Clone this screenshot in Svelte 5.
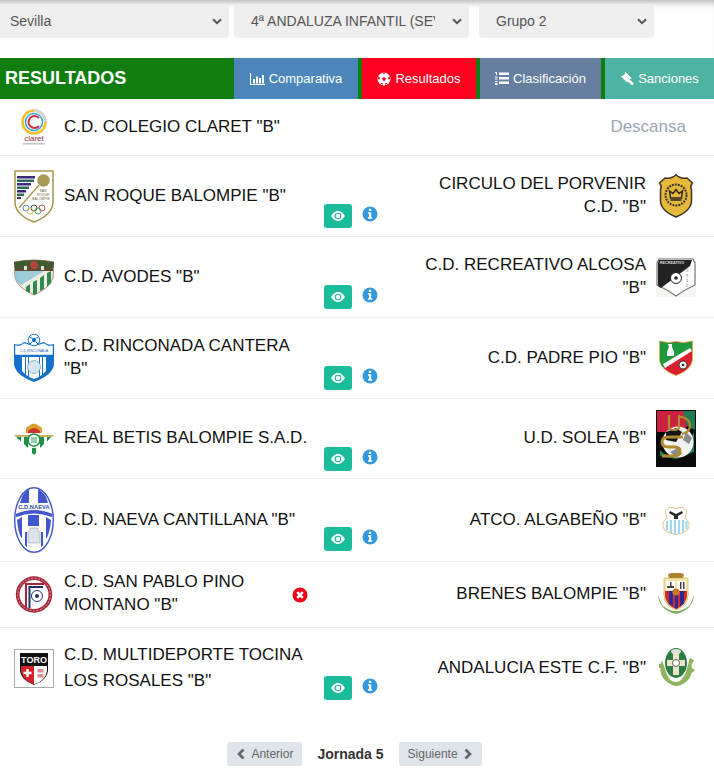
<script>
  const selects = [
    { label: 'Sevilla', cls: 'province' },
    { label: '4ª ANDALUZA INFANTIL (SEVILLA)', cls: 'league' },
    { label: 'Grupo 2', cls: 'group' }
  ];
  const tabs = [
    { label: 'Comparativa', icon: 'bars', cls: 'blue' },
    { label: 'Resultados', icon: 'ball', cls: 'red' },
    { label: 'Clasificación', icon: 'list', cls: 'slate' },
    { label: 'Sanciones', icon: 'gavel', cls: 'teal' }
  ];
  const rows = [
    { home: 'C.D. COLEGIO CLARET "B"', homeCrest: 'claret', rest: true, h: 56 },
    { home: 'SAN ROQUE BALOMPIE "B"', homeCrest: 'roque', away: 'CIRCULO DEL PORVENIR C.D. "B"', awayCrest: 'circulo', h: 80 },
    { home: 'C.D. AVODES "B"', homeCrest: 'avodes', away: 'C.D. RECREATIVO ALCOSA "B"', awayCrest: 'alcosa', h: 80 },
    { home: 'C.D. RINCONADA CANTERA "B"', homeCrest: 'rinconada', away: 'C.D. PADRE PIO "B"', awayCrest: 'pio', h: 80 },
    { home: 'REAL BETIS BALOMPIE S.A.D.', homeCrest: 'betis', away: 'U.D. SOLEA "B"', awayCrest: 'solea', h: 79 },
    { home: 'C.D. NAEVA CANTILLANA "B"', homeCrest: 'naeva', away: 'ATCO. ALGABEÑO "B"', awayCrest: 'algabeno', h: 82 },
    { home: 'C.D. SAN PABLO PINO MONTANO "B"', homeCrest: 'pablo', away: 'BRENES BALOMPIE "B"', awayCrest: 'brenes', h: 65, cancelled: true },
    { home: 'C.D. MULTIDEPORTE TOCINA LOS ROSALES "B"', homeCrest: 'toro', away: 'ANDALUCIA ESTE C.F. "B"', awayCrest: 'andalucia', h: 80, loose: true }
  ];
</script>

{#snippet crest(id)}
  {#if id === 'claret'}
    <svg width="28" height="37" viewBox="0 0 28 37">
      <circle cx="14" cy="13" r="11.500" fill="none" stroke="#f5c02c" stroke-width="2.600"/>
      <path d="M14 1.500A11.500 11.500 0 0 1 25.500 13" fill="none" stroke="#d5d5d8" stroke-width="2.600"/>
      <circle cx="14" cy="13" r="8.500" fill="none" stroke="#37a6de" stroke-width="1.600"/>
      <path d="M19 9A6 6 0 1 0 19 17" fill="none" stroke="#c8324a" stroke-width="2"/>
      <text x="14" y="32" class="t" font-size="8" fill="#8a3040" text-anchor="middle">claret</text>
      <rect x="3" y="34" width="22" height="1.600" fill="#c9c3c8"/>
    </svg>
  {:else if id === 'roque'}
    <svg width="40" height="53" viewBox="0 0 40 53">
      <path d="M1 1H39V33Q38 45 20 52Q2 45 1 33Z" fill="#fff" stroke="#a5954e" stroke-width="1.500"/>
      <path d="M3 6h18v2.500H3z" fill="#3b2a75"/><path d="M3 9.500h17V12H3z" fill="#2e6b55"/>
      <path d="M3 13h14v2.500H3z" fill="#3b2a75"/><path d="M3 16.500h12V19H3z" fill="#2e6b55"/>
      <path d="M3 20h9v2.500H3z" fill="#3b2a75"/><path d="M3 23.500h7V26H3z" fill="#2e6b55"/>
      <path d="M3 27h4v2H3z" fill="#3b2a75"/>
      <circle cx="29.500" cy="10.500" r="6.200" fill="#a89a55"/>
      <path d="M25 15L5 38" stroke="#a5954e" stroke-width="1.300"/>
      <text x="29" y="22" class="t" font-size="3.400" fill="#6b6540" text-anchor="middle">SAN</text>
      <text x="29" y="26" class="t" font-size="3.400" fill="#6b6540" text-anchor="middle">ROQUE</text>
      <text x="27" y="30" class="t" font-size="3.400" fill="#6b6540" text-anchor="middle">BALOMPIE</text>
      <g fill="none" stroke-width="0.900">
        <circle cx="12" cy="38" r="3" stroke="#4a7fc0"/><circle cx="20" cy="38" r="3" stroke="#333"/><circle cx="28" cy="38" r="3" stroke="#c44"/>
        <circle cx="16" cy="41" r="3" stroke="#d9b93f"/><circle cx="24" cy="41" r="3" stroke="#4a9a5a"/>
      </g>
    </svg>
  {:else if id === 'avodes'}
    <svg width="40" height="37" viewBox="0 0 40 37">
      <path d="M0 3Q20-1 40 3L39 19Q36 29 20 36Q4 29 1 19Z" fill="#f1ece4" stroke="#a9705c" stroke-width="0.800"/>
      <path d="M0 3Q20-1 40 3L39.500 9H.5Z" fill="#3d5a30"/>
      <path d="M1 9H39L39 12H1Z" fill="#5e4a36"/>
      <circle cx="20" cy="6" r="4" fill="#b0483a"/>
      <rect x="10" y="7" width="3" height="4" fill="#e6e0d0"/><rect x="27" y="7" width="3" height="4" fill="#e6e0d0"/>
      <path d="M1 12H30L7 26Q2 23 1 19Z" fill="#93c7d6"/>
      <path d="M30 12L7 26L4 12Z" fill="#a9d1dc" opacity=".5"/>
      <path d="M12 28L16 25V34L12 32ZM19 23L23 21V35L19 36ZM26 19L30 16V30L26 32ZM33 14L37 12V24L33 28Z" fill="#2f8a4e"/>
    </svg>
  {:else if id === 'rinconada'}
    <svg width="40" height="49" viewBox="0 0 40 49">
      <path d="M0 10Q6 12 10 8Q20 12 30 8Q34 12 40 10V30Q39 41 20 48Q1 41 0 30Z" fill="#1470c8"/>
      <path d="M1 11Q6 13 10 9Q20 13 30 9Q34 13 39 11V21H1Z" fill="#fff" stroke="#1470c8" stroke-width="0.500"/>
      <circle cx="20" cy="6" r="5.800" fill="#fff" stroke="#1470c8" stroke-width="1"/>
      <circle cx="20" cy="6" r="2.200" fill="#1470c8"/>
      <path d="M15.500 3l2.500 1M24.500 3l-2.500 1M16 10l2-2M24 10l-2-2" stroke="#1470c8" stroke-width="1"/>
      <text x="20" y="17.500" class="t" font-size="3.500" fill="#1a5ea8" text-anchor="middle">C.D.RINCONADA</text>
      <path d="M8 23h3v17l-3-3ZM12 23h2v19l-2-1ZM26 23h2v18l-2 1ZM29 23h3v14l-3 3Z" fill="#fff"/>
      <path d="M15 23H25V43L20 45L15 43Z" fill="#fff"/>
      <circle cx="20" cy="33" r="6.500" fill="#d9e6f2" stroke="#7fa7cc" stroke-width="0.800"/>
    </svg>
  {:else if id === 'betis'}
    <svg width="40" height="33" viewBox="0 0 40 33">
      <path d="M0 13H40L20 33Z" fill="#fff"/>
      <path d="M0 13H40L38 15H2Z" fill="#c8b45a"/>
      <path d="M3 15h4v4.500L3 16ZM10 15h4v11l-4-4ZM26 15h4v7l-4 4ZM33 15h4l-4 4.500Z" fill="#1d9248"/>
      <path d="M17.500 15h5v17h-5z" fill="#e7efe2"/><path d="M18 26h4v5l-2 2-2-2z" fill="#1d9248"/>
      <circle cx="20" cy="18" r="6" fill="#fff" stroke="#1d9248" stroke-width="1.600"/>
      <path d="M17 16h6M17 18h6M17 20h6" stroke="#1d9248" stroke-width="0.900"/>
      <path d="M12 11Q11 5 15 4Q20-1 25 4Q29 5 28 11Z" fill="#d9a02b"/>
      <path d="M14 9Q20 3 26 9V11H14Z" fill="#c8342e"/>
    </svg>
  {:else if id === 'naeva'}
    <svg width="40" height="66" viewBox="0 0 40 66">
      <ellipse cx="20" cy="33" rx="19.300" ry="32.300" fill="#fff" stroke="#4257c9" stroke-width="1.400"/>
      <path d="M6 16Q8 6 15 2V16ZM24 2Q32 6 34 16H24Z" fill="#4257c9"/>
      <path d="M1.500 27Q20 19 38.500 27L38 30Q20 23 2 30Z" fill="#4257c9"/>
      <path d="M3 33L8 30V52Q4 46 3 33ZM37 33L32 30V52Q36 46 37 33ZM14 28H25V39H14ZM11 45h2V60l-2-1.500zM27 45h2v13.500L27 60z" fill="#4257c9"/>
      <text x="20" y="22" class="t b" font-size="5.800" fill="#3447ad" text-anchor="middle">C.D.NAEVA</text>
      <path d="M16 41h8v3l2 1v11H14V45l2-1z" fill="#dfe4ea" stroke="#8795a8" stroke-width="0.500"/>
    </svg>
  {:else if id === 'pablo'}
    <svg width="38" height="39" viewBox="0 0 38 39">
      <circle cx="19" cy="19.500" r="18.200" fill="#a5273a"/>
      <circle cx="19" cy="19.500" r="14.500" fill="#fff"/>
      <circle cx="19" cy="19.500" r="16.300" fill="none" stroke="#e8cfd3" stroke-width="0.700" stroke-dasharray="2 1.500"/>
      <path d="M10 8H29V10H12V32H10Z" fill="#a5273a"/>
      <path d="M13.500 11H28V13H15.500V33H13.500Z" fill="#22306b"/>
      <circle cx="22" cy="21" r="5.500" fill="#fff" stroke="#22306b" stroke-width="1"/>
      <circle cx="22" cy="21" r="2" fill="#22306b"/>
    </svg>
  {:else if id === 'toro'}
    <svg width="40" height="39" viewBox="0 0 40 39">
      <rect x=".5" y=".5" width="39" height="38" fill="#fff" stroke="#a8a8a8"/>
      <path d="M6 4H34V22Q33 31 20 36Q7 31 6 22Z" fill="#111"/>
      <path d="M7 17H20V35.500Q8 31 7 22Z" fill="#d5202e"/>
      <path d="M20 17H33V22Q32 31 20 35.500Z" fill="#fff"/>
      <text x="20" y="14" class="t b" font-size="9" fill="#fff" text-anchor="middle">TORO</text>
      <path d="M13.500 20v8M9.500 24h8" stroke="#fff" stroke-width="2.400"/>
      <rect x="23.500" y="20" width="6" height="3.500" fill="#d98b90"/><rect x="23.500" y="25" width="6" height="3.500" fill="#d98b90"/>
    </svg>
  {:else if id === 'circulo'}
    <svg width="36" height="44" viewBox="0 0 36 44">
      <path d="M18 .8Q22 5 29 4L34.500 9Q32 12 33.500 16V27Q33 37 18 43Q3 37 2.500 27V16Q4 12 1.500 9L7 4Q14 5 18 .8Z" fill="#e6b93a" stroke="#3a3528" stroke-width="1.500"/>
      <circle cx="18" cy="21" r="10.500" fill="none" stroke="#3a3528" stroke-width="2" stroke-dasharray="2 1"/>
      <path d="M12.500 24L11.500 17L15 19.500L18 15.500L21 19.500L24.500 17L23.500 24Z" fill="none" stroke="#2e2a20" stroke-width="1.500"/>
      <path d="M12.500 26h11" stroke="#2e2a20" stroke-width="1.600"/>
    </svg>
  {:else if id === 'alcosa'}
    <svg width="40" height="40" viewBox="0 0 40 40">
      <rect width="40" height="40" fill="#f4f6f2"/>
      <path d="M3 2H37L39 6V28Q28 33 20 39Q12 33 1 28V6Z" fill="#fff" stroke="#777" stroke-width="1.200"/>
      <path d="M3 3H36L34 9L5 31Q2 30 2 28V6Z" fill="#222"/>
      <circle cx="20" cy="21" r="5.500" fill="#fff" stroke="#222" stroke-width="1"/>
      <circle cx="20" cy="21" r="1.800" fill="#222"/>
      <text x="16" y="7" class="t b" font-size="3.800" fill="#ddd" text-anchor="middle">RECREATIVO</text>
      <text x="31" y="15" class="t" font-size="4" fill="#666" text-anchor="middle">1</text>
      <text x="31" y="20" class="t" font-size="4" fill="#666" text-anchor="middle">9</text>
      <text x="31" y="25" class="t" font-size="4" fill="#666" text-anchor="middle">1</text>
      <text x="31" y="30" class="t" font-size="4" fill="#666" text-anchor="middle">2</text>
    </svg>
  {:else if id === 'pio'}
    <svg width="34" height="36" viewBox="0 0 34 36">
      <path d="M.5 1Q9 4 17 1.500Q25 4 33.500 1V20Q32 30 17 35.500Q2 30 .5 20Z" fill="#d9202f" stroke="#d8b23c" stroke-width="0.800"/>
      <path d="M1 1.500Q9 4 17 2Q25 4 33 1.500V10L5 28Q1 24 1 20Z" fill="#1d9a3c"/>
      <path d="M4 24L31 8L33 11L6 28Z" fill="#fff"/>
      <path d="M9 4h4v3l2 5v4H8v-4l2-5z" fill="#fff"/>
      <circle cx="24" cy="25" r="4" fill="#fff" stroke="#222" stroke-width="0.800"/>
      <circle cx="24" cy="25" r="1.300" fill="#222"/>
    </svg>
  {:else if id === 'solea'}
    <svg width="40" height="57" viewBox="0 0 40 57">
      <rect width="40" height="57" fill="#0b0b0b"/>
      <path d="M1 1H39V8L26 22H1Z" fill="#c9223e"/>
      <path d="M27 1H39V20L31 16Z" fill="#1e7d52"/>
      <path d="M4 40Q20 58 38 22V42L20 49L4 46Z" fill="#1e7d52"/>
      <circle cx="22" cy="32" r="15.500" fill="#f2f2ee"/>
      <path d="M10 22L20 18L26 22L20 32L10 30Z" fill="#141414"/>
      <path d="M30 22L36 28L33 34L27 30ZM14 42L22 38L26 44L20 47Z" fill="#8a8a8a"/>
      <path d="M13 5V17Q13 20 18 20Q23 20 23 17V5M24 7H26Q34 9 34 16Q34 22 26 24" fill="none" stroke="#b38a2f" stroke-width="2.200"/>
      <path d="M27 27H13Q6 27 6 32Q6 37 13 37H18Q24 37 24 41Q24 46 18 46H6" fill="none" stroke="#b38a2f" stroke-width="3"/>
    </svg>
  {:else if id === 'algabeno'}
    <svg width="28" height="29" viewBox="0 0 28 29">
      <path d="M3 5L8 1Q14 4 20 1L25 5L23 12Q28 15 27 21Q25 27 14 28.500Q3 27 1 21Q0 15 5 12Z" fill="#fff" stroke="#e0c488" stroke-width="1"/>
      <path d="M8 5L14 8L20 5L21 7L16 10V13H12V10L7 7Z" fill="#2b2b2b"/>
      <path d="M5 15v9M9 14v13M13 14v14M17 14v14M21 14v12M24.500 15v8" stroke="#a5d6ee" stroke-width="2.200"/>
    </svg>
  {:else if id === 'brenes'}
    <svg width="38" height="43" viewBox="0 0 38 43">
      <path d="M1 22Q2 37 19 41Q36 37 37 22L33 32Q26 38 19 38Q12 38 5 32Z" fill="#86b05e"/>
      <path d="M7 5H31V23Q30 33 19 37Q8 33 7 23Z" fill="#f4e3a8" stroke="#d9bb55" stroke-width="0.800"/>
      <path d="M11 1Q19-2 27 1L26 5H12Z" fill="#a8862f"/>
      <path d="M9 8h9v9H9z" fill="#fff"/><path d="M20 8h9v9h-9z" fill="#fff"/>
      <path d="M10 13h7v2h-7zM13 9h1.500v5H13z" fill="#444"/><path d="M23 9h1.500v7H23zM26 9h1.500v7H26z" fill="#444"/>
      <path d="M8 18H30V23Q29 32 19 36Q9 32 8 23Z" fill="#d42a2a"/>
      <path d="M12 18h4v15.500l-4-3ZM18 18h3v17.500h-3zM23 18h4v12.500l-4 3Z" fill="#2a2a9a"/>
      <circle cx="19" cy="19" r="3.600" fill="#c9792c"/>
    </svg>
  {:else if id === 'andalucia'}
    <svg width="38" height="40" viewBox="0 0 38 40">
      <path d="M5 12Q0 26 10 34Q16 38 19 38Q24 38 30 33Q38 26 33 10L29 24Q25 34 19 34Q12 34 9 24Z" fill="#8fb35f"/>
      <path d="M33 10l4 2-2 4-3-2zM2 16l4-1 0 5-4 0zM35 20l3 2-3 3-2-3z" fill="#8fb35f"/>
      <ellipse cx="19" cy="15" rx="11" ry="15" fill="#2f7d46"/>
      <ellipse cx="19" cy="3.500" rx="5" ry="2.500" fill="#dfe3dc"/>
      <path d="M16 5h6v7h6v6h-6v9h-6v-9h-6v-6h6z" fill="#ece4c4"/>
      <circle cx="19" cy="15" r="3.500" fill="#fff" stroke="#444" stroke-width="0.800"/>
    </svg>
  {/if}
{/snippet}

{#snippet tabIcon(name)}
  {#if name === 'bars'}
    <svg class="ti" width="15" height="12" viewBox="0 0 15 12">
      <path d="M.5 0v11.500H15" fill="none" stroke="#fff" stroke-width="1.100"/>
      <path d="M3 6h2v4.500H3zM6 3.500h2v7H6zM9 5h2v5.500H9zM12 2h2v8.500h-2z" fill="#fff"/>
    </svg>
  {:else if name === 'ball'}
    <svg class="ti" width="14" height="14" viewBox="0 0 14 14">
      <circle cx="7" cy="7" r="6.500" fill="#fff"/>
      <path d="M7 5L8.900 6.400 8.200 8.700H5.800L5.100 6.400Z M5.300 .8L8.700 .8 7 2.200Z M1.200 4.400L2.800 5 2.500 7.500 1 7.200Z M12.800 4.400L11.200 5 11.500 7.500 13 7.200Z M3.800 11.200L5.400 10.800 6 12.600 4.800 12.600Z M10.200 11.200L8.600 10.800 8 12.600 9.200 12.600Z" fill="#ff0020"/>
    </svg>
  {:else if name === 'list'}
    <svg class="ti" width="14" height="13" viewBox="0 0 14 13">
      <path d="M4 .5h10v2.500H4zM4 5h10v2.500H4zM4 9.500h10V12H4z" fill="#fff"/>
      <path d="M0 0h2v1H0zM1 1h1v2H1zM0 4.500h2.500v1H0zM0 6.500h2.500v1H0zM0 9h2.500v1H0zM0 11h2.500v1H0zM0 12h2.500v1H0z" fill="#fff"/>
    </svg>
  {:else}
    <svg class="ti" width="14" height="14" viewBox="0 0 14 14">
      <path d="M5.500 1.200L10.800 6.500 7.800 9.500 2.500 4.200Z" fill="#fff"/>
      <path d="M1 4.500L2 3.500 7.800 9.300 6.800 10.300ZM4.500.5L5.500 0 11.500 6 10.800 7Z" fill="#fff"/>
      <path d="M8 6.500L14 11.300 12.300 13.500 6 8Z" fill="#fff"/>
    </svg>
  {/if}
{/snippet}

<main class="page">
  <div class="filters">
    {#each selects as s}
      <div class="select-wrap {s.cls}">
        <select>
          <option>{s.label}</option>
        </select>
        <svg class="caret" width="10" height="7" viewBox="0 0 10 7"><path d="M1 1.200L5 5.200 9 1.200" fill="none" stroke="#555" stroke-width="2"/></svg>
      </div>
    {/each}
  </div>

  <header class="bar">
    <h1>RESULTADOS</h1>
    <nav class="tabs">
      {#each tabs as t}
        <a class="tab {t.cls}" href="#top">{@render tabIcon(t.icon)}{t.label}</a>
      {/each}
    </nav>
  </header>

  <section class="list">
    {#each rows as r}
      <article class="row" class:loose={r.loose} class:off={r.cancelled} style:height="{r.h}px">
        <div class="home">
          <div class="logo">{@render crest(r.homeCrest)}</div>
          <div class="name">{r.home}</div>
          {#if r.cancelled}
            <svg class="cancel" width="16" height="16" viewBox="0 0 16 16">
              <circle cx="8" cy="8" r="7.500" fill="#f00018"/>
              <path d="M5.200 5.200L10.800 10.800M10.800 5.200L5.200 10.800" stroke="#fff" stroke-width="2.600"/>
            </svg>
          {/if}
        </div>
        {#if r.rest}
          <div class="rest">Descansa</div>
        {:else}
          <div class="actions">
            {#if !r.cancelled}
              <button class="eye" aria-label="Ver">
                <svg width="14" height="10" viewBox="0 0 14 10">
                  <path d="M0 5Q3 0 7 0Q11 0 14 5Q11 10 7 10Q3 10 0 5Z" fill="#fff"/>
                  <circle cx="7" cy="5" r="3.300" fill="#1abc9c"/>
                  <circle cx="7" cy="5" r="2.200" fill="#fff"/>
                </svg>
              </button>
              <svg class="info" width="16" height="16" viewBox="0 0 16 16">
                <circle cx="8" cy="8" r="7.500" fill="#3498db"/>
                <path d="M6.800 2.800h2.400v2.200H6.800zM6 6.300h3.200v5h1v1.500H6v-1.500h1v-3.500H6z" fill="#fff"/>
              </svg>
            {/if}
          </div>
          <div class="away">
            <div class="name">{r.away}</div>
            <div class="logo">{@render crest(r.awayCrest)}</div>
          </div>
        {/if}
      </article>
    {/each}
  </section>

  <footer class="pager">
    <a class="page-btn" href="#top">
      <svg width="10" height="12" viewBox="0 0 10 12"><path d="M7.500 1.500L3 6l4.500 4.500" fill="none" stroke="#666" stroke-width="2.600"/></svg>
      Anterior
    </a>
    <strong>Jornada 5</strong>
    <a class="page-btn" href="#top">
      Siguiente
      <svg width="10" height="12" viewBox="0 0 10 12"><path d="M2.500 1.500L7 6l-4.500 4.500" fill="none" stroke="#666" stroke-width="2.600"/></svg>
    </a>
  </footer>
</main>

<style>
  :global(body) {
    margin: 0;
    background: #fff;
    font-family: "Liberation Sans", Arial, sans-serif;
  }
  .page {
    width: 714px;
    height: 773px;
    overflow: hidden;
  }
  .filters {
    display: flex;
    height: 58px;
    box-sizing: border-box;
    padding-top: 4px;
    margin-left: -7px;
    box-shadow: inset 0 7px 7px -5px #aaa;
  }
  .select-wrap {
    position: relative;
    height: 34px;
  }
  .province { width: 236px; margin-right: 5px; }
  .league { width: 235px; margin-right: 10px; }
  .group { width: 175px; }
  select {
    appearance: none;
    display: block;
    width: 100%;
    height: 34px;
    border: 0;
    border-radius: 4px;
    background: #eee;
    color: #555;
    font: 14px "Liberation Sans", Arial, sans-serif;
    padding: 0 34px 0 17px;
    box-sizing: border-box;
  }
  .caret {
    position: absolute;
    right: 7px;
    top: 14px;
    pointer-events: none;
  }
  .bar {
    display: flex;
    height: 41px;
    background: #107d10;
  }
  h1 {
    width: 234px;
    margin: 0;
    padding-left: 5px;
    box-sizing: border-box;
    color: #fff;
    font-size: 18px;
    line-height: 41px;
    font-weight: 700;
  }
  .tabs {
    display: flex;
    gap: 4px;
    width: 480px;
  }
  .tab {
    display: flex;
    align-items: center;
    justify-content: center;
    gap: 4px;
    color: #fff;
    font-size: 13px;
    text-decoration: none;
  }
  .blue { width: 124px; background: #4d86bb; }
  .red { width: 114px; background: #ff0020; }
  .slate { width: 121px; background: #667e9f; }
  .teal { width: 109px; background: #4eb3a2; }
  .ti { flex: none; }
  .row {
    display: grid;
    grid-template-columns: 314px 82px 318px;
    box-sizing: content-box;
    border-bottom: 1px solid #eee;
    color: #111;
    font-size: 17px;
    line-height: 23px;
  }
  .row:last-child { border-bottom: 0; }
  .row.loose { line-height: 26px; }
  .home, .away {
    display: flex;
    align-items: center;
    gap: 10px;
  }
  .home { padding-left: 14px; }
  .name { padding-bottom: 2px; }
  .row.off .home .name { padding-bottom: 4px; }
  .row.loose .name { padding-bottom: 0; }
  .home .name { flex: 1; min-width: 0; }
  .away {
    justify-content: flex-end;
    padding-right: 18px;
  }
  .away .name {
    width: 232px;
    text-align: right;
  }
  .logo {
    width: 40px;
    flex: none;
    display: flex;
    justify-content: center;
    align-items: center;
  }
  .logo svg { display: block; }
  .cancel {
    flex: none;
    margin-right: 6px;
  }
  .actions {
    display: flex;
    align-items: flex-start;
    padding: 48px 0 0 10px;
    gap: 10px;
  }
  .eye {
    width: 28px;
    height: 24px;
    padding: 0;
    border: 0;
    border-radius: 3px;
    background: #1abc9c;
    display: flex;
    align-items: center;
    justify-content: center;
  }
  .info {
    margin-top: 2px;
  }
  .rest {
    grid-column: 2 / 4;
    align-self: center;
    text-align: right;
    padding: 0 28px 2px 0;
    color: #9aa6b2;
    font-size: 17px;
  }
  .pager {
    display: flex;
    align-items: center;
    justify-content: center;
    gap: 15px;
    margin-top: 34px;
    padding-right: 5px;
    height: 24px;
    color: #333;
    font-size: 14px;
  }
  .page-btn {
    display: flex;
    align-items: center;
    gap: 5px;
    height: 24px;
    padding: 0 9px;
    border-radius: 3px;
    background: #dfe3ea;
    color: #666;
    font-size: 12px;
    text-decoration: none;
  }
  .t { font-family: "Liberation Sans", Arial, sans-serif; }
  .b { font-weight: 700; }
</style>
